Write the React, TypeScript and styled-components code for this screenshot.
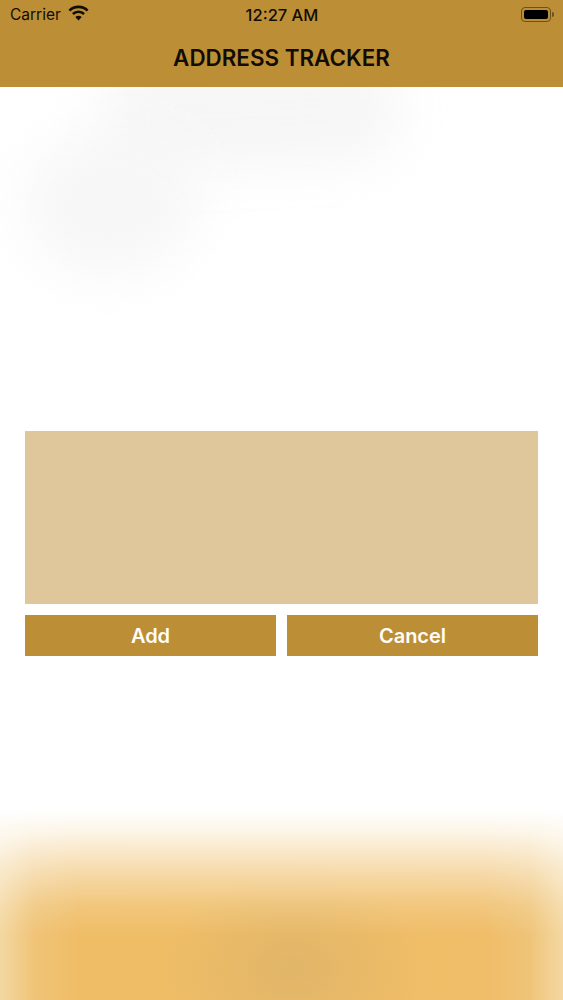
import React from 'react';
import styled, { createGlobalStyle } from 'styled-components';

const GlobalStyle = createGlobalStyle`
    html,
    body {
        margin: 0;
        padding: 0;
        background: #ffffff;
    }
    * {
        box-sizing: border-box;
    }
`;

const App: React.FC = () => {
    return (
        <Page>
            <GlobalStyle />
            <GreyBand />
            <GreyBlob />
            <AmberGlow />
            <Header>
                <StatusBar>
                    <Carrier>
                        Carrier
                        <svg width="21" height="16" viewBox="0 0 21 16" fill="none">
                            <path d="M1.4 5.6 A13 13 0 0 1 19.6 5.6" stroke="#120c02" strokeWidth="2.7" />
                            <path d="M4.9 9 A8.2 8.2 0 0 1 16.1 9" stroke="#120c02" strokeWidth="2.6" />
                            <path d="M10.5 15.6 L7.3 12.1 A4.6 4.6 0 0 1 13.7 12.1 Z" fill="#120c02" />
                        </svg>
                    </Carrier>
                    <Clock>12:27 AM</Clock>
                    <Battery>
                        <BatteryBody>
                            <BatteryLevel />
                        </BatteryBody>
                        <BatteryCap />
                    </Battery>
                </StatusBar>
                <Title>ADDRESS TRACKER</Title>
            </Header>
            <Content>
                <NoteField />
                <ButtonRow>
                    <ActionButton>Add</ActionButton>
                    <ActionButton>Cancel</ActionButton>
                </ButtonRow>
            </Content>
        </Page>
    );
};

const Page = styled.div`
    position: relative;
    display: flex;
    flex-direction: column;
    width: 563px;
    height: 1000px;
    overflow: hidden;
    background: #ffffff;
`;

const GreyBand = styled.div`
    position: absolute;
    left: 105px;
    top: 62px;
    width: 292px;
    height: 105px;
    background: #f6f6f7;
    border-radius: 30px;
    transform: rotate(-3deg);
    filter: blur(26px);
`;

const GreyBlob = styled.div`
    position: absolute;
    left: 24px;
    top: 130px;
    width: 178px;
    height: 146px;
    background: #f7f7f8;
    border-radius: 45% 50% 50% 50%;
    transform: rotate(-14deg);
    filter: blur(26px);
`;

const AmberGlow = styled.div`
    position: absolute;
    left: 0;
    right: 0;
    top: 810px;
    height: 190px;
    background:
        radial-gradient(ellipse 130px 95px at 52% 84%, rgba(222, 180, 105, 0.85), rgba(222, 180, 105, 0) 100%),
        linear-gradient(90deg, #f4d8a2 0%, #efc478 6%, #efbd66 14%, #f0bd68 86%, #efc478 94%, #f4d8a2 100%);
    mask-image: linear-gradient(
        180deg,
        rgba(0, 0, 0, 0) 0%,
        rgba(0, 0, 0, 0.18) 24px,
        rgba(0, 0, 0, 0.54) 60px,
        rgba(0, 0, 0, 0.85) 95px,
        rgba(0, 0, 0, 1) 125px
    );
`;

const Header = styled.header`
    position: relative;
    z-index: 1;
    flex: 0 0 87px;
    display: flex;
    flex-direction: column;
    background: #bc8f37;
    color: #120c02;
`;

const StatusBar = styled.div`
    display: grid;
    grid-template-columns: 1fr auto 1fr;
    align-items: center;
    height: 29px;
    padding: 0 9px 0 10px;
    font-family: Inter, 'Liberation Sans', sans-serif;
`;

const Carrier = styled.div`
    display: flex;
    align-items: center;
    gap: 7px;
    font-size: 15.5px;

    svg {
        margin-top: -3px;
    }
`;

const Clock = styled.div`
    font-size: 16.5px;
    font-weight: 500;
`;

const Battery = styled.div`
    display: flex;
    align-items: center;
    justify-self: end;
    gap: 1px;
`;

const BatteryBody = styled.div`
    width: 30px;
    height: 15px;
    padding: 2px;
    border: 1px solid #6b5120;
    border-radius: 4px;
`;

const BatteryLevel = styled.div`
    width: 100%;
    height: 100%;
    background: #000000;
    border-radius: 2px;
`;

const BatteryCap = styled.div`
    width: 2px;
    height: 5px;
    background: #6b5120;
    border-radius: 0 2px 2px 0;
`;

const Title = styled.h1`
    margin: 0;
    padding-top: 14px;
    text-align: center;
    font-family: Inter, 'Liberation Sans', sans-serif;
    font-size: 22.4px;
    font-weight: 600;
    line-height: 30px;
`;

const Content = styled.main`
    position: relative;
    z-index: 1;
    flex: 1;
    display: flex;
    flex-direction: column;
    justify-content: center;
    gap: 11px;
    padding: 0 25px;
`;

const NoteField = styled.div`
    height: 173px;
    background: #dfc69b;
`;

const ButtonRow = styled.div`
    display: grid;
    grid-template-columns: 1fr 1fr;
    gap: 11px;
`;

const ActionButton = styled.button`
    height: 41px;
    padding: 0;
    border: none;
    background: #bc8f37;
    color: #fffdf8;
    font-family: Inter, 'Liberation Sans', sans-serif;
    font-size: 20px;
    font-weight: 600;
    cursor: pointer;
`;

export default App;
